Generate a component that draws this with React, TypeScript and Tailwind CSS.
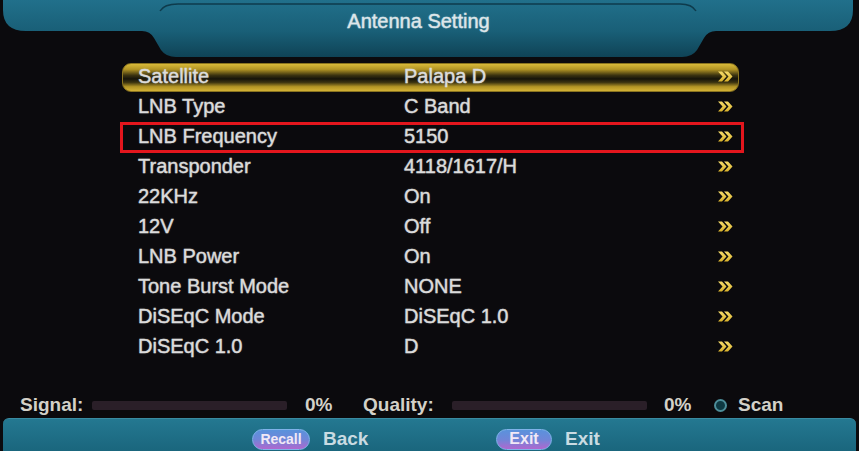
import React from 'react';

type Row = { label: string; value: string };

const rows: Row[] = [
  { label: 'Satellite', value: 'Palapa D' },
  { label: 'LNB Type', value: 'C Band' },
  { label: 'LNB Frequency', value: '5150' },
  { label: 'Transponder', value: '4118/1617/H' },
  { label: '22KHz', value: 'On' },
  { label: '12V', value: 'Off' },
  { label: 'LNB Power', value: 'On' },
  { label: 'Tone Burst Mode', value: 'NONE' },
  { label: 'DiSEqC Mode', value: 'DiSEqC 1.0' },
  { label: 'DiSEqC 1.0', value: 'D' },
];

const Arrows: React.FC = () => (
  <svg width="16" height="13" viewBox="0 0 16 13">
    <defs>
      <linearGradient id="arr" x1="0" y1="0" x2="0" y2="1">
        <stop offset="0" stopColor="#f6dc6a" />
        <stop offset="1" stopColor="#d9b22c" />
      </linearGradient>
    </defs>
    <path d="M1 1.5h4l4.5 5-4.5 5H1l4.5-5z" fill="url(#arr)" />
    <path d="M7 1.5h4l4.5 5-4.5 5H7l4.5-5z" fill="url(#arr)" />
  </svg>
);

const Header: React.FC = () => (
  <div className="relative h-[57px] shrink-0">
    <svg className="absolute inset-0" width="859" height="57" viewBox="0 0 859 57">
      <defs>
        <linearGradient id="hdr" x1="0" y1="0" x2="0" y2="1">
          <stop offset="0" stopColor="#21708b" />
          <stop offset="0.55" stopColor="#195f77" />
          <stop offset="1" stopColor="#0f4356" />
        </linearGradient>
      </defs>
      <path
        d="M3 0H853V10Q853 31 830 31H716Q708 31 704 38L697 50Q692 57 682 57H176Q166 57 161 50L154 38Q150 31 142 31H26Q3 31 3 10Z"
        fill="url(#hdr)"
      />
      <path d="M160 11Q164 4 178 4H680Q692 4 696 11" fill="none" stroke="#0e3b4c" strokeWidth="1.5" />
    </svg>
    <div className="relative flex justify-center pr-[22px] pt-[9px] text-[20px] leading-[24px] text-[#dde6ea] [-webkit-text-stroke:0.4px_#dde6ea] [text-shadow:0_0_2px_rgba(255,255,255,0.35)]">
      Antenna Setting
    </div>
  </div>
);

const MenuRow: React.FC<{ row: Row; index: number }> = ({ row, index }) => {
  const active = index === 0;
  const marked = index === 2;
  return (
    <div className="relative h-[30px]">
      {active && (
        <div className="absolute inset-x-0 top-[2px] bottom-[-1px] rounded-[9px] border border-[#8a7420] bg-[linear-gradient(to_bottom,#d9ba3a_0%,#b29424_20%,#3a3210_42%,#16140a_55%,#3a3210_68%,#b29424_84%,#d4b236_100%)]" />
      )}
      {marked && (
        <div className="absolute top-[1px] bottom-[-2px] left-[-2px] right-[-5px] border-[3px] border-[#e3161d]" />
      )}
      <div className="relative flex h-full items-center pl-[16px] pr-[6px] text-[20px] text-[#dcdcdc] [-webkit-text-stroke:0.4px_#dcdcdc] [text-shadow:0_0_2px_rgba(255,255,255,0.3)]">
        <div className="w-[266px]">{row.label}</div>
        <div className="flex-1">{row.value}</div>
        <Arrows />
      </div>
    </div>
  );
};

const Bar: React.FC = () => <div className="h-[9px] w-[195px] rounded-[2px] bg-[#2a1f28]" />;

const Pill: React.FC<{ label: string; w: string; size: string }> = ({ label, w, size }) => (
  <div
    className={`${w} ${size} flex h-[21px] items-center justify-center rounded-full border border-[#7fb2ea] bg-[linear-gradient(to_bottom,#5a92dc_0%,#6f86d8_50%,#b067cf_100%)] font-bold text-[#f1e8f6]`}
  >
    {label}
  </div>
);

export default function App() {
  return (
    <div
      className="flex h-[451px] w-[859px] flex-col overflow-hidden bg-[#0b0a0d]"
      style={{ fontFamily: '"Liberation Sans", Arial, sans-serif' }}
    >
      <Header />

      <div className="flex-1 pl-[122px] pr-[120px] pt-[4px]">
        {rows.map((r, i) => (
          <MenuRow key={r.label} row={r} index={i} />
        ))}
      </div>

      <div className="flex h-[26px] shrink-0 items-center pl-[20px] text-[19px] font-bold text-[#d3d1c8]">
        <span className="w-[72px]">Signal:</span>
        <Bar />
        <span className="ml-[18px] w-[58px]">0%</span>
        <span className="w-[89px]">Quality:</span>
        <Bar />
        <span className="ml-[17px] w-[50px]">0%</span>
        <span className="h-[13px] w-[13px] rounded-full border-2 border-[#4d8e9a] bg-[#0e3942]" />
        <span className="ml-[11px]">Scan</span>
      </div>

      <div className="mx-[3px] flex h-[33px] shrink-0 items-center rounded-t-[6px] border-t border-[#3a8ca2] bg-[linear-gradient(to_bottom,#247891,#1a667d)] pl-[249px] pt-[8px] text-[19px] font-bold text-[#c9dbe2]">
        <Pill label="Recall" w="w-[58px]" size="text-[14px]" />
        <span className="ml-[13px] w-[173px]">Back</span>
        <Pill label="Exit" w="w-[56px]" size="text-[16px]" />
        <span className="ml-[13px]">Exit</span>
      </div>
    </div>
  );
}
